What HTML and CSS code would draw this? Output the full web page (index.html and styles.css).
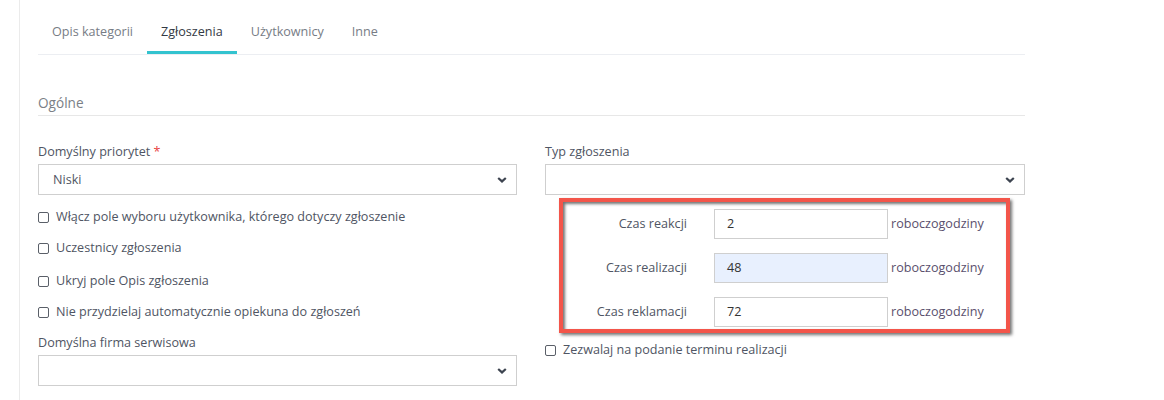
FILE: index.html
```html
<!DOCTYPE html>
<html lang="pl">
<head>
<meta charset="utf-8">
<title>Kategoria</title>
<link rel="stylesheet" href="styles.css">
</head>
<body>
<div class="page">
  <ul class="tabs">
    <li class="tab">Opis kategorii</li>
    <li class="tab active">Zgłoszenia</li>
    <li class="tab">Użytkownicy</li>
    <li class="tab">Inne</li>
  </ul>

  <div class="legend">Ogólne</div>

  <div class="cols">
    <div class="col">
      <div class="label">Domyślny priorytet <span class="req">*</span></div>
      <div class="select">
        <span class="value">Niski</span>
        <svg class="chev" width="10" height="6" viewBox="0 0 10 6"><polyline points="1.2,1 5,4.4 8.8,1" fill="none" stroke="#3d4450" stroke-width="2.2"/></svg>
      </div>
      <div class="checks">
        <div class="check"><span class="box"></span>Włącz pole wyboru użytkownika, którego dotyczy zgłoszenie</div>
        <div class="check"><span class="box"></span>Uczestnicy zgłoszenia</div>
        <div class="check gap3"><span class="box"></span>Ukryj pole Opis zgłoszenia</div>
        <div class="check"><span class="box"></span>Nie przydzielaj automatycznie opiekuna do zgłoszeń</div>
      </div>
      <div class="label firm">Domyślna firma serwisowa</div>
      <div class="select">
        <span class="value"></span>
        <svg class="chev" width="10" height="6" viewBox="0 0 10 6"><polyline points="1.2,1 5,4.4 8.8,1" fill="none" stroke="#3d4450" stroke-width="2.2"/></svg>
      </div>
    </div>

    <div class="col">
      <div class="label">Typ zgłoszenia</div>
      <div class="select">
        <span class="value"></span>
        <svg class="chev" width="10" height="6" viewBox="0 0 10 6"><polyline points="1.2,1 5,4.4 8.8,1" fill="none" stroke="#3d4450" stroke-width="2.2"/></svg>
      </div>
      <div class="highlight">
        <div class="trow">
          <span class="tlabel">Czas reakcji</span>
          <span class="tinput">2</span>
          <span class="unit">roboczogodziny</span>
        </div>
        <div class="trow">
          <span class="tlabel">Czas realizacji</span>
          <span class="tinput filled">48</span>
          <span class="unit">roboczogodziny</span>
        </div>
        <div class="trow">
          <span class="tlabel">Czas reklamacji</span>
          <span class="tinput">72</span>
          <span class="unit">roboczogodziny</span>
        </div>
      </div>
      <div class="check single"><span class="box"></span>Zezwalaj na podanie terminu realizacji</div>
    </div>
  </div>
</div>
</body>
</html>
```

FILE: styles.css
```css
html, body {
  margin: 0;
  padding: 0;
  background: #ffffff;
}

body {
  font-family: "Open Sans", "Noto Sans", sans-serif;
  font-size: 12.6px;
  line-height: 20px;
  color: #4f5563;
}

.page {
  margin-left: 19px;
  border-left: 1px solid #ebebeb;
  padding-left: 18px;
  width: 987px;
  min-height: 400px;
  box-sizing: content-box;
}

.tabs {
  list-style: none;
  margin: 0;
  padding: 10px 0 0 0;
  display: flex;
  border-bottom: 1px solid #eceef2;
}

.tab {
  padding: 12px 14px 9px 14px;
  color: #777c85;
  border-bottom: 3px solid transparent;
}

.tab.active {
  color: #333a44;
  border-bottom-color: #33c3cf;
}

.legend {
  margin-top: 38px;
  padding-bottom: 2px;
  font-size: 13.6px;
  color: #7b7f86;
  border-bottom: 1px solid #e7e7e7;
}

.cols {
  display: grid;
  grid-template-columns: 479px 480px;
  column-gap: 28px;
  margin-top: 26px;
}

.col {
  display: flex;
  flex-direction: column;
}

.label {
  color: #4f5563;
  margin-bottom: 2px;
}

.req {
  color: #e8423f;
}

.select {
  height: 31px;
  box-sizing: border-box;
  border: 1px solid #cfcfcf;
  display: flex;
  align-items: center;
  justify-content: space-between;
  padding: 0 9px 0 14px;
  color: #4f5563;
}

.chev {
  display: block;
}

.checks {
  display: flex;
  flex-direction: column;
  gap: 11px;
  margin-top: 12px;
}

.check {
  display: flex;
  align-items: center;
  color: #4f5563;
}

.check.gap3 {
  margin-top: 2px;
}

.box {
  width: 11px;
  height: 11px;
  border: 1px solid #5a5f68;
  border-radius: 2px;
  box-sizing: border-box;
  margin-right: 7px;
  flex: none;
}

.label.firm {
  margin-top: 11px;
}

.highlight {
  margin: 3px 15px 0 14px;
  border: 4px solid #f3554a;
  padding: 7px 0 2px 0;
  box-shadow: 2px 2px 3px rgba(0, 0, 0, 0.55), inset 2px 2px 3px rgba(0, 0, 0, 0.55);
  display: flex;
  flex-direction: column;
  gap: 14px;
}

.trow {
  display: flex;
  align-items: center;
}

.tlabel {
  width: 124px;
  text-align: right;
  margin-right: 27px;
  color: #4f5563;
}

.tinput {
  width: 174px;
  height: 30px;
  box-sizing: border-box;
  border: 1px solid #cfcfcf;
  padding: 0 12px;
  display: flex;
  align-items: center;
  color: #333;
  background: #fff;
}

.tinput.filled {
  background: #e8f0fe;
}

.unit {
  margin-left: 3px;
  color: #5a4f6d;
}

.check.single {
  margin-top: 7px;
}
```
